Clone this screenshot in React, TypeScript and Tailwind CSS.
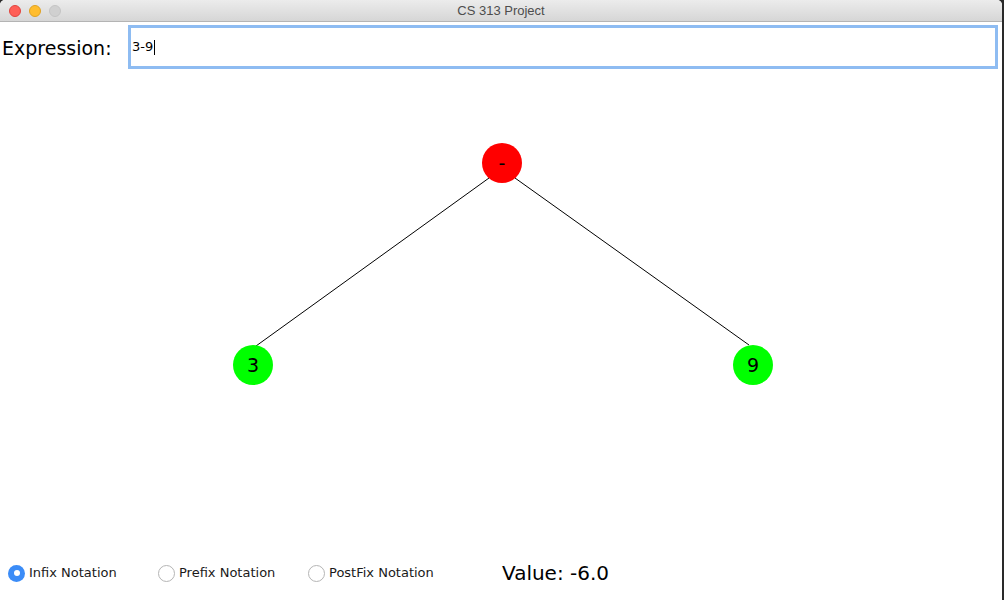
import React from 'react';

type Node = { label: string; x: number; y: number; color: string };

const nodes: Node[] = [
  { label: '-', x: 502, y: 163, color: '#ff0000' },
  { label: '3', x: 253, y: 365, color: '#00ff00' },
  { label: '9', x: 753, y: 365, color: '#00ff00' },
];

function Radio({ checked, label }: { checked?: boolean; label: string }) {
  return (
    <label className="flex items-center gap-[4px]">
      {checked ? (
        <span className="grid size-[17px] place-items-center rounded-full bg-[#3b8cf7]">
          <span className="size-[6px] rounded-full bg-white" />
        </span>
      ) : (
        <span className="size-[17px] rounded-full border border-[#b5b5b5] bg-white" />
      )}
      <span className="text-[13px] text-[#1a1a1a]">{label}</span>
    </label>
  );
}

export default function App() {
  return (
    <div
      className="flex h-[600px] w-[1004px] flex-col overflow-hidden bg-[#2a2a2a]"
      style={{ fontFamily: '"DejaVu Sans", "Liberation Sans", sans-serif' }}
    >
      <div className="mr-[2px] flex h-[600px] flex-col overflow-hidden rounded-t-[5px] bg-white">
        {/* title bar */}
        <div className="relative flex h-[22px] shrink-0 items-center border-b border-[#b4b4b4] bg-gradient-to-b from-[#ececec] to-[#d6d6d6]">
          <div className="flex gap-[8px] pl-[9px]">
            <span className="size-[12px] rounded-full border border-[#e0443e] bg-[#ff5f57]" />
            <span className="size-[12px] rounded-full border border-[#dea123] bg-[#ffbd2e]" />
            <span className="size-[12px] rounded-full border border-[#c4c4c4] bg-[#d0d0d0]" />
          </div>
          <div className="absolute inset-0 flex items-center justify-center text-[13px] text-[#4d4d4d]" style={{ fontFamily: '"Liberation Sans", sans-serif' }}>
            CS 313 Project
          </div>
        </div>

        {/* expression row */}
        <div className="flex items-center pt-[3px]">
          <span className="w-[128px] pl-[2px] pt-[2px] text-[19px] text-black">Expression:</span>
          <div className="mr-[4px] flex h-[44px] flex-1 items-center border-[3px] border-[#8ebcf2] bg-white pl-[1px]">
            <span className="text-[13px] text-black">3-9</span>
            <span className="ml-[1px] h-[15px] w-px bg-black" />
          </div>
        </div>

        {/* tree canvas */}
        <div className="relative flex-1">
          <svg className="absolute left-0 top-[-69px] h-[600px] w-[1004px]" viewBox="0 0 1004 600">
            <line x1="489" y1="178" x2="256" y2="346" stroke="#000" strokeWidth="1" />
            <line x1="515" y1="178" x2="749" y2="345" stroke="#000" strokeWidth="1" />
            {nodes.map((n) => (
              <g key={n.label}>
                <circle cx={n.x} cy={n.y} r="20" fill={n.color} />
                <text
                  x={n.x}
                  y={n.y + 7}
                  textAnchor="middle"
                  fontSize="19"
                  fill="#000"
                  fontFamily='"DejaVu Sans", sans-serif'
                >
                  {n.label}
                </text>
              </g>
            ))}
          </svg>
        </div>

        {/* bottom controls */}
        <div className="flex h-[40px] items-center pb-[14px] pl-[8px]">
          <div className="w-[150px]">
            <Radio checked label="Infix Notation" />
          </div>
          <div className="w-[150px]">
            <Radio label="Prefix Notation" />
          </div>
          <div className="w-[194px]">
            <Radio label="PostFix Notation" />
          </div>
          <span className="text-[20px] text-black">Value: -6.0</span>
        </div>
      </div>
    </div>
  );
}
